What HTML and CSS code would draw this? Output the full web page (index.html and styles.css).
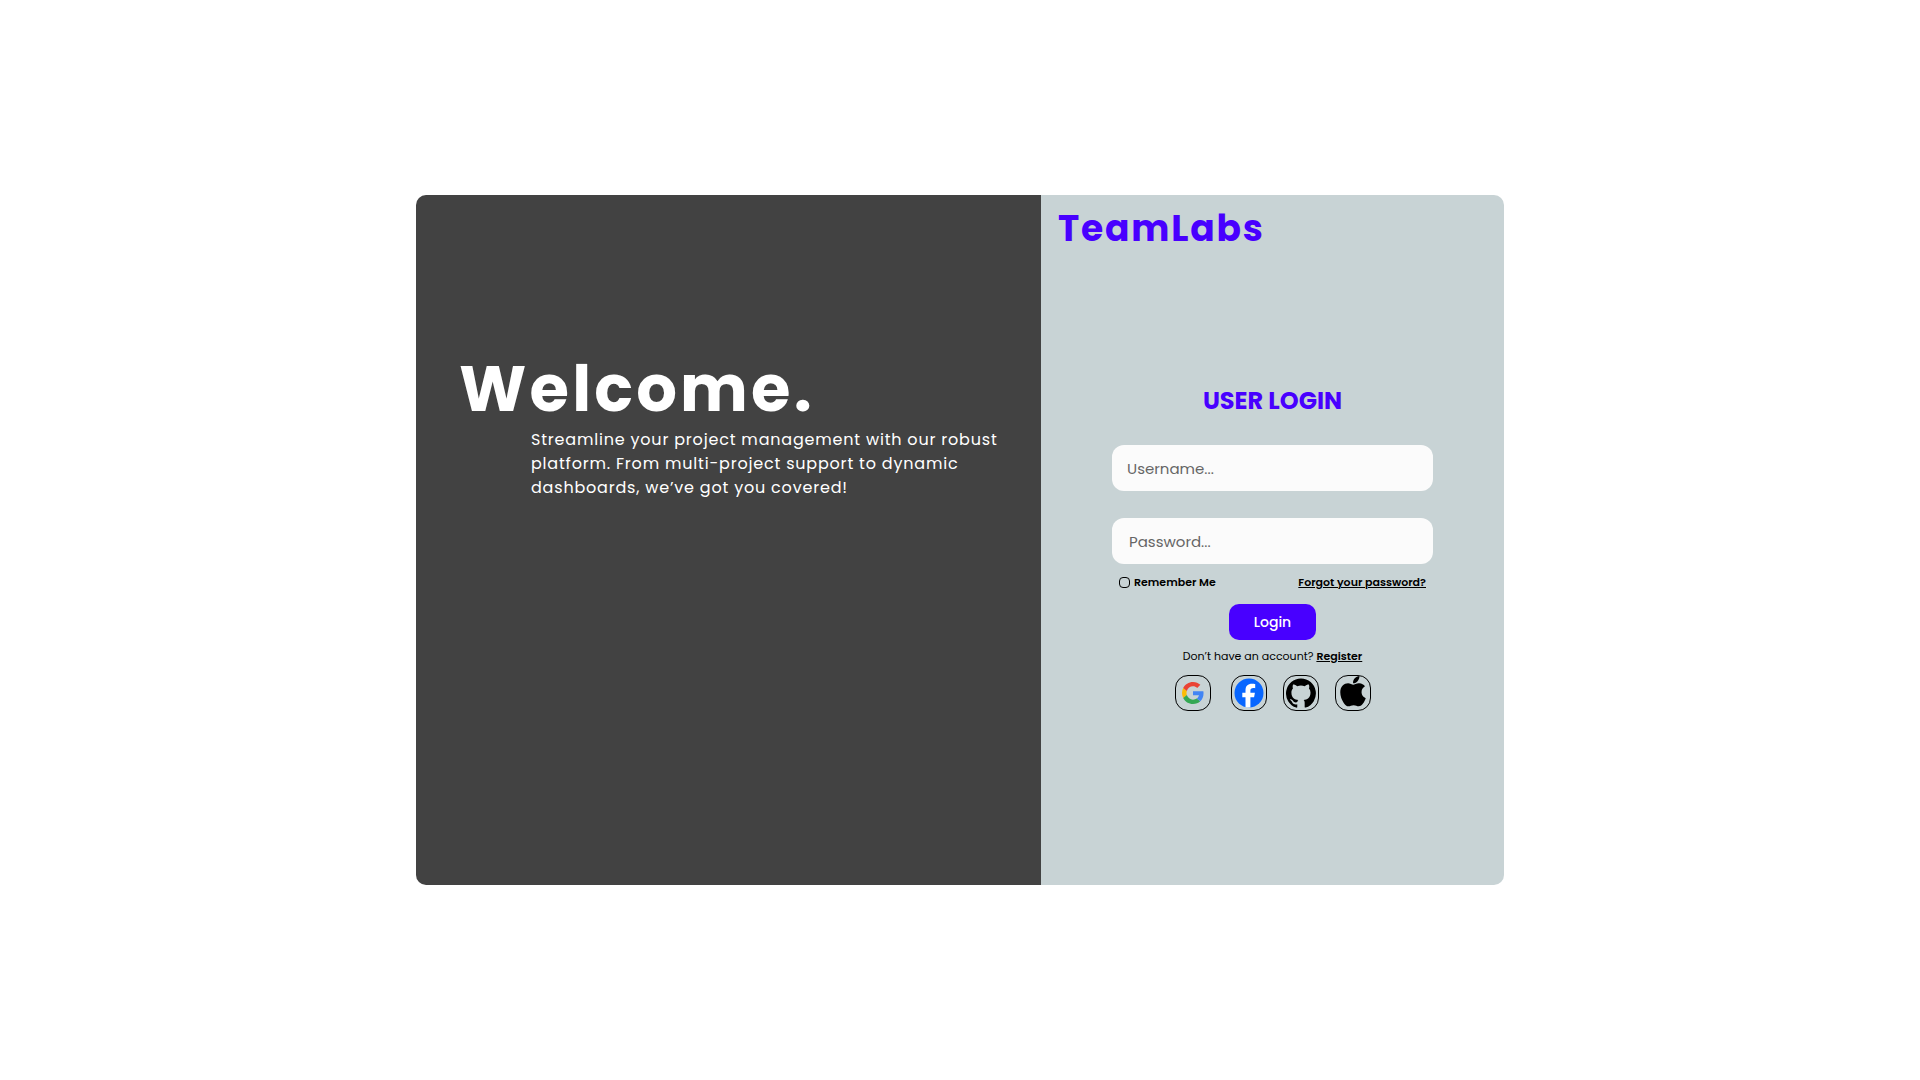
FILE: index.html
```html
<!DOCTYPE html>
<html lang="en">
<head>
<meta charset="utf-8">
<meta name="viewport" content="width=device-width, initial-scale=1">
<title>TeamLabs – Login</title>
<link rel="stylesheet" href="styles.css">
</head>
<body>
<main class="card">
  <section class="intro">
    <h1 class="intro-title">Welcome.</h1>
    <p class="intro-text">Streamline your project management with our robust platform. From multi-project support to dynamic dashboards, we’ve got you covered!</p>
  </section>
  <section class="panel">
    <p class="brand">TeamLabs</p>
    <form class="login">
      <h2 class="login-title">USER LOGIN</h2>
      <div class="fields">
        <input class="field" type="text" placeholder="Username..." aria-label="Username">
        <input class="field field-password" type="password" placeholder="Password..." aria-label="Password">
      </div>
      <div class="options">
        <label class="remember"><input class="check" type="checkbox">Remember Me</label>
        <a class="link" href="#">Forgot your password?</a>
      </div>
      <button class="submit" type="submit">Login</button>
      <p class="signup">Don’t have an account? <a class="link" href="#">Register</a></p>
      <div class="social">
        <button class="social-button social-google" type="button" aria-label="Google">
          <svg width="22" height="22" viewBox="0 0 48 48">
            <path fill="#fbbc05" d="M10.53 28.59A14.5 14.5 0 0 1 9.77 24c0-1.6.28-3.14.76-4.59l-7.98-6.19A23.9 23.9 0 0 0 0 24c0 3.88.92 7.54 2.56 10.78z"/>
            <path fill="#ea4335" d="M24 9.5c3.54 0 6.71 1.22 9.21 3.6l6.85-6.85C35.9 2.38 30.47 0 24 0 14.62 0 6.51 5.38 2.56 13.22l7.98 6.19C12.43 13.72 17.74 9.5 24 9.5z"/>
            <path fill="#34a853" d="M24 48c6.48 0 11.93-2.13 15.89-5.81l-7.73-6c-2.15 1.45-4.92 2.3-8.16 2.3-6.26 0-11.57-4.22-13.47-9.91l-7.98 6.19C6.51 42.62 14.62 48 24 48z"/>
            <path fill="#4285f4" d="M46.98 24.55c0-1.57-.15-3.09-.38-4.55H24v9.02h12.94c-.58 2.96-2.26 5.48-4.78 7.18l7.73 6c4.51-4.18 7.09-10.36 7.09-17.65z"/>
          </svg>
        </button>
        <button class="social-button" type="button" aria-label="Facebook">
          <svg width="30" height="30" viewBox="0 0 30 30">
            <circle cx="15" cy="15" r="14.5" fill="#0866ff"/>
            <path fill="#fff" d="M11.500 29.200V19.300H8.300v-4.600h3.200v-2C11.500 7.900 13.700 5.800 18.200 5.800c.9 0 2.400.15 3 .3v4.100c-.4 0-1-.1-1.700-.1-2.300 0-3.100.8-3.100 3v1.600h4.500l-.8 4.600h-3.700v10c-1.400.3-3.400.3-4.900-.1z"/>
          </svg>
        </button>
        <button class="social-button" type="button" aria-label="GitHub">
          <svg width="30" height="30" viewBox="0 0 24 24">
            <path d="M12 .3a12 12 0 0 0-3.8 23.38c.6.12.83-.26.83-.57L9 21.070c-3.340.72-4.040-1.610-4.040-1.610-.55-1.390-1.340-1.760-1.340-1.760-1.080-.74.090-.73.090-.73 1.200.09 1.830 1.240 1.830 1.240 1.080 1.830 2.810 1.300 3.500 1 .1-.78.420-1.310.76-1.610-2.670-.3-5.470-1.330-5.470-5.930 0-1.310.47-2.380 1.240-3.220-.14-.3-.54-1.520.1-3.180 0 0 1-.32 3.300 1.230a11.500 11.500 0 0 1 6 0c2.280-1.550 3.290-1.230 3.290-1.230.64 1.660.240 2.880.12 3.180a4.650 4.650 0 0 1 1.230 3.220c0 4.610-2.800 5.630-5.480 5.920.420.36.81 1.100.81 2.220l-.01 3.290c0 .31.2.69.820.57A12 12 0 0 0 12 .3"/>
          </svg>
        </button>
        <button class="social-button social-apple" type="button" aria-label="Apple">
          <svg width="26" height="32" viewBox="0 0 384 472" preserveAspectRatio="none">
            <path transform="translate(0 -32)" d="M318.700 268.700c-.2-36.700 16.400-64.400 50-84.800-18.800-26.900-47.200-41.700-84.700-44.600-35.500-2.800-74.300 20.700-88.500 20.700-15 0-49.400-19.700-76.400-19.700C63.300 141.200 4 184.800 4 273.500q0 39.300 14.400 81.200c12.800 36.700 59 126.700 107.200 125.200 25.200-.6 43-17.900 75.800-17.900 31.800 0 48.300 17.900 76.400 17.900 48.600-.7 90.400-82.500 102.600-119.300-65.200-30.700-61.700-90-61.700-91.900zm-56.600-164.200c27.300-32.400 24.800-61.900 24-72.500-24.100 1.400-52 16.400-67.900 34.900-17.500 19.800-27.800 44.300-25.600 71.900 26.100 2 49.900-11.400 69.500-34.300z"/>
          </svg>
        </button>
      </div>
    </form>
  </section>
</main>
</body>
</html>
```
FILE: styles.css
```css
* {
  box-sizing: border-box;
  margin: 0;
}

body {
  min-height: 100vh;
  display: flex;
  align-items: center;
  justify-content: center;
  background: #fff;
  color: #000;
  font-family: Poppins, Inter, sans-serif;
}

.card {
  width: 100%;
  max-width: 1088px;
  min-height: 690px;
  display: grid;
  grid-template-columns: 625fr 463fr;
  border-radius: 10px;
  overflow: hidden;
}

.intro {
  padding: 146px 36px 40px 43px;
  background: #424242;
  color: #fff;
}

.intro-title {
  font-size: 64px;
  line-height: 96px;
  font-weight: 700;
  letter-spacing: 0.05em;
}

.intro-text {
  margin-top: -9px;
  padding-left: 72px;
  font-size: 16px;
  line-height: 24px;
  letter-spacing: 0.05em;
}

.panel {
  padding: 7px 17px 40px;
  background: #c8d3d5;
}

.brand {
  color: #4800ff;
  font-size: 36px;
  line-height: 54px;
  font-weight: 700;
  letter-spacing: 0.05em;
}

.login {
  max-width: 321px;
  margin: 127px auto 0;
  display: flex;
  flex-direction: column;
  align-items: center;
}

.login-title {
  color: #4800ff;
  font-size: 24px;
  line-height: 36px;
  font-weight: 700;
}

.fields {
  width: 100%;
  margin-top: 26px;
  display: grid;
  gap: 27px;
}

.field {
  width: 100%;
  height: 46px;
  padding: 0 15px;
  border: 0;
  border-radius: 12px;
  background: #fbfbfb;
  color: #222;
  font: inherit;
  font-size: 15px;
}

.field-password {
  padding: 0 17px;
}

.field::placeholder {
  color: #666;
  opacity: 1;
}

.options {
  width: 100%;
  margin-top: 9px;
  padding: 0 7px;
  display: flex;
  align-items: center;
  justify-content: space-between;
  font-size: 11px;
  line-height: 18px;
  font-weight: 600;
}

.remember {
  display: flex;
  align-items: center;
  gap: 4px;
}

.check {
  appearance: none;
  width: 11px;
  height: 11px;
  border: 1px solid #000;
  border-radius: 4px;
}

.check:checked {
  background: #4800ff;
}

.link {
  color: inherit;
  font-weight: 600;
}

.submit {
  height: 36px;
  margin-top: 13px;
  padding: 0 25px;
  border: 0;
  border-radius: 10px;
  background: #4800ff;
  color: #fff;
  font: inherit;
  font-size: 14px;
  font-weight: 500;
}

.signup {
  margin-top: 7px;
  font-size: 11px;
  line-height: 18px;
}

.social {
  margin-top: 10px;
  display: flex;
  gap: 16px;
}

.social-button {
  width: 36px;
  height: 36px;
  padding: 0;
  display: grid;
  place-items: center;
  border: 1px solid #000;
  border-radius: 13px;
  background: none;
}

.social-google {
  margin-right: 4px;
}

.social-apple {
  align-items: start;
}
```
